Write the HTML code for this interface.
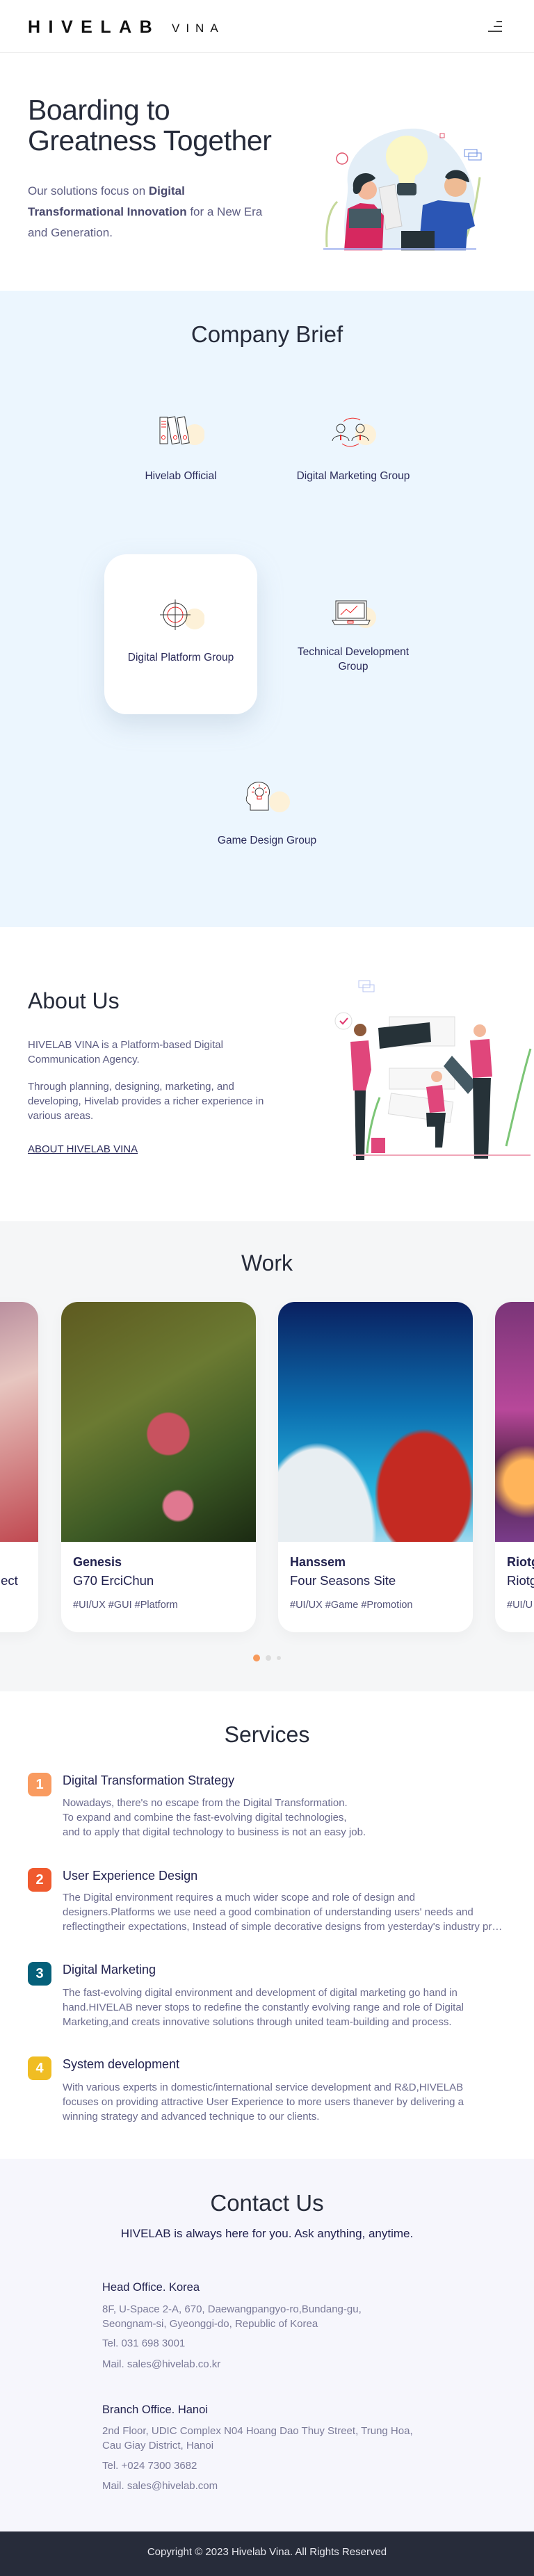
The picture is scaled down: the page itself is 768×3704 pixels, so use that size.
<!DOCTYPE html>
<html><head><meta charset="utf-8">
<style>
*{margin:0;padding:0;box-sizing:border-box}
html,body{width:768px;height:3704px;overflow:hidden}
body{position:relative;font-family:"Liberation Sans",sans-serif;color:#262b3a;background:#fff}
#w{position:absolute;left:0;top:0;width:768px;height:3704px;overflow:hidden}
.a{position:absolute}
.sec{position:absolute;left:0;width:768px}
.h2{position:absolute;left:0;width:768px;text-align:center;font-size:33px;font-weight:500;color:#262b3a}
.lbl{font-size:15.5px;color:#2b2b5a;text-align:center;position:absolute}
.card{position:absolute;top:1872px;width:280px;height:475px;border-radius:24px;overflow:hidden;background:#fff;box-shadow:0 6px 20px rgba(0,0,0,.04)}
.card .img{height:345px}
.card .t1{position:absolute;left:17px;top:364px;font-size:18px;font-weight:bold;color:#22224f}
.card .t2{position:absolute;left:17px;top:390px;font-size:18.5px;color:#22224f}
.card .t3{position:absolute;left:17px;top:428px;font-size:14.5px;color:#55557a}
.badge{position:absolute;left:40px;width:34px;height:34px;border-radius:8px;color:#fff;font-size:20px;font-weight:bold;text-align:center;line-height:34px}
.st{position:absolute;left:90px;font-size:18px;color:#22224f;font-weight:500}
.sb{position:absolute;left:90px;width:650px;font-size:15px;line-height:21px;color:#6b6b8e;white-space:nowrap;overflow:hidden;text-overflow:ellipsis}
.ct{position:absolute;left:147px;font-size:15px;color:#7a7a98;line-height:21px}
</style></head><body><div id="w">

<!-- header -->
<div class="sec" style="top:0;height:76px;border-bottom:1px solid #eee"></div>
<div class="a" style="left:40px;top:25px;font-size:25px;font-weight:bold;letter-spacing:11.5px;color:#111">HIVELAB</div>
<div class="a" style="left:247px;top:31px;font-size:17px;letter-spacing:9px;color:#111">VINA</div>
<div class="a" style="left:714px;top:30px;width:8px;height:2px;background:#444"></div>
<div class="a" style="left:710px;top:37px;width:12px;height:2px;background:#444"></div>
<div class="a" style="left:702px;top:44px;width:20px;height:2px;background:#444"></div>

<!-- hero -->
<div class="a" style="left:40px;top:136px;font-size:41px;line-height:44px;color:#262b3a;letter-spacing:-0.5px">Boarding to<br>Greatness Together</div>
<div class="a" style="left:40px;top:260px;font-size:17px;line-height:30px;color:#5d5d82;width:400px;white-space:nowrap">Our solutions focus on <b style="color:#4a4a6e">Digital</b><br><b style="color:#4a4a6e">Transformational Innovation</b> for a New Era<br>and Generation.</div>
<svg class="a" style="left:440px;top:170px" width="280" height="200" viewBox="0 0 280 200">
<path d="M60 95 C55 50 100 18 150 15 C200 12 230 60 240 100 C250 140 235 185 200 188 L60 188 C48 150 62 120 60 95Z" fill="#e3eef7"/>
<circle cx="145" cy="55" r="30" fill="#fbf7c6"/>
<path d="M132 80 L158 80 L155 95 L135 95Z" fill="#fbf7c6"/>
<rect x="131" y="93" width="28" height="18" rx="4" fill="#37474f"/>
<circle cx="52" cy="58" r="8" fill="none" stroke="#e0566d" stroke-width="1.5"/>
<path d="M228 45 h18 v10 h-18z M234 50 h18 v10 h-18z" fill="#fff" stroke="#6b8ee0" stroke-width="1"/>
<rect x="193" y="22" width="6" height="6" fill="none" stroke="#e0566d"/>
<path d="M30 185 C28 150 35 130 45 120" stroke="#c5d89a" stroke-width="3" fill="none"/>
<path d="M225 185 C240 150 245 120 250 85" stroke="#c5d89a" stroke-width="3" fill="none"/>
<path d="M105 100 L128 95 L138 155 L115 160Z" fill="#eee" stroke="#ccc"/>
<path d="M55 190 L60 130 L78 122 L98 124 L112 140 L110 190Z" fill="#d6285f"/>
<circle cx="88" cy="103" r="14" fill="#f3b99b"/>
<path d="M68 100 C65 80 90 72 100 86 C96 92 84 90 80 100 C78 112 66 112 68 100Z" fill="#263238"/>
<rect x="62" y="130" width="46" height="28" fill="#455a64"/>
<path d="M162 190 L168 125 L190 118 L235 122 L243 155 L232 160 L230 190Z" fill="#2b56b5"/>
<circle cx="215" cy="97" r="16" fill="#eebb94"/>
<path d="M200 85 C205 70 232 70 235 92 C228 92 220 82 205 88Z" fill="#263238"/>
<rect x="137" y="162" width="48" height="28" fill="#263238"/>
<rect x="25" y="187" width="220" height="2" fill="#a8b8f0"/>
</svg>

<!-- company brief -->
<div class="sec" style="top:418px;height:915px;background:#ecf6fe"></div>
<div class="h2" style="top:462px">Company Brief</div>
<svg class="a" style="left:228px;top:598px" width="66" height="50" viewBox="0 0 66 50">
<circle cx="52" cy="27" r="15" fill="#fdf1d8"/>
<rect x="2" y="2" width="11" height="38" fill="#fff" stroke="#333"/>
<rect x="16" y="2" width="11" height="38" fill="#fff" stroke="#333" transform="rotate(-10 21 21)"/>
<rect x="30" y="2" width="11" height="38" fill="#fff" stroke="#333" transform="rotate(-10 35 21)"/>
<path d="M4 8h7M4 12h7M4 16h7" stroke="#e22" stroke-width="1"/><circle cx="7" cy="31" r="2.5" fill="none" stroke="#e22"/>
<circle cx="24" cy="31" r="2.5" fill="none" stroke="#e22"/><circle cx="38" cy="31" r="2.5" fill="none" stroke="#e22"/>
</svg>
<svg class="a" style="left:476px;top:600px" width="66" height="50" viewBox="0 0 66 50">
<circle cx="50" cy="25" r="15" fill="#fdf1d8"/>
<circle cx="14" cy="16" r="6" fill="none" stroke="#333"/><path d="M2 34 C3 24 25 24 26 34" fill="none" stroke="#333"/>
<circle cx="42" cy="16" r="6" fill="none" stroke="#333"/><path d="M30 34 C31 24 53 24 54 34" fill="none" stroke="#333"/>
<path d="M14 25 v8 M42 25 v8" stroke="#e22" stroke-width="2"/>
<path d="M42 4 C35 0 25 0 18 6 M16 38 C24 44 34 42 40 38" fill="none" stroke="#e22"/>
</svg>
<div class="a" style="left:150px;top:797px;width:220px;height:230px;border-radius:32px;background:#fff;box-shadow:0 15px 35px rgba(160,180,200,.35)"></div>
<svg class="a" style="left:228px;top:862px" width="66" height="50" viewBox="0 0 66 50">
<circle cx="52" cy="28" r="15" fill="#fdf1d8"/>
<circle cx="24" cy="22" r="17" fill="none" stroke="#333"/><circle cx="24" cy="22" r="11" fill="none" stroke="#e22"/>
<path d="M24 0v44M2 22h44" stroke="#333"/>
</svg>
<svg class="a" style="left:476px;top:860px" width="66" height="50" viewBox="0 0 66 50">
<circle cx="50" cy="28" r="15" fill="#fdf1d8"/>
<rect x="7" y="4" width="44" height="28" fill="#fff" stroke="#333"/><rect x="10" y="7" width="38" height="22" fill="none" stroke="#333"/>
<path d="M2 32h54l-3 6H5z" fill="#fff" stroke="#333"/>
<path d="M14 24l8-8 6 5 10-10" fill="none" stroke="#e22"/><rect x="24" y="33" width="8" height="3" fill="none" stroke="#e22"/>
</svg>
<svg class="a" style="left:352px;top:1123px" width="66" height="50" viewBox="0 0 66 50">
<circle cx="50" cy="30" r="15" fill="#fdf1d8"/>
<path d="M8 42 V34 C0 30 2 24 4 20 C2 6 14 0 24 2 C34 4 38 14 34 22 V42Z" fill="#fff" stroke="#333"/>
<circle cx="21" cy="16" r="6" fill="none" stroke="#333"/><path d="M18 22h6v4h-6z" fill="none" stroke="#e22"/>
<path d="M21 5v3M12 9l2 2M30 9l-2 2M10 16h3M29 16h3" stroke="#e22"/>
</svg>
<div class="lbl" style="left:140px;top:676px;width:240px">Hivelab Official</div>
<div class="lbl" style="left:388px;top:676px;width:240px">Digital Marketing Group</div>
<div class="lbl" style="left:140px;top:937px;width:240px">Digital Platform Group</div>
<div class="lbl" style="left:388px;top:927px;width:240px;line-height:21px">Technical Development<br>Group</div>
<div class="lbl" style="left:264px;top:1200px;width:240px">Game Design Group</div>

<!-- about -->
<div class="a" style="left:40px;top:1421px;font-size:32px;color:#262b3a">About Us</div>
<div class="a" style="left:40px;top:1492px;font-size:15px;line-height:21px;color:#5d5d82;width:370px">HIVELAB VINA is a Platform-based Digital<br>Communication Agency.</div>
<div class="a" style="left:40px;top:1552px;font-size:15px;line-height:21px;color:#5d5d82;width:380px">Through planning, designing, marketing, and<br>developing, Hivelab provides a richer experience in<br>various areas.</div>
<div class="a" style="left:40px;top:1644px;font-size:15px;color:#2b2b5a;text-decoration:underline">ABOUT HIVELAB VINA</div>
<svg class="a" style="left:468px;top:1408px" width="300" height="262" viewBox="0 0 300 262">
<path d="M48 2h16v10H48z M54 8h16v10H54z" fill="#fff" stroke="#b9c6f0"/>
<rect x="92" y="54" width="94" height="42" fill="#f7f7f7" stroke="#ddd"/>
<rect x="92" y="128" width="94" height="30" fill="#f7f7f7" stroke="#ddd"/>
<rect x="92" y="170" width="90" height="30" fill="#f7f7f7" stroke="#ddd" transform="rotate(8 137 185)"/>
<circle cx="26" cy="60" r="12" fill="#fff" stroke="#ddd"/><path d="M21 60l4 4 7-8" stroke="#e0356d" stroke-width="2" fill="none"/>
<path d="M76 70 L150 62 L152 90 L78 100Z" fill="#263238"/>
<path d="M170 125 L182 110 L218 150 L205 165Z" fill="#455a64"/>
<circle cx="50" cy="73" r="9" fill="#8d5a3b"/>
<path d="M36 90 L62 88 L66 130 L58 160 L40 160Z" fill="#e0467b"/>
<path d="M42 160 h16 l-2 100 h-12z" fill="#263238"/>
<circle cx="160" cy="140" r="8" fill="#f3b99b"/>
<path d="M145 155 L168 152 L172 190 L150 192Z" fill="#e0467b"/>
<path d="M145 192 h28 l-5 50 h-10 l0-30 h-12z" fill="#263238"/>
<circle cx="222" cy="74" r="9" fill="#f3b99b"/>
<path d="M208 88 L236 86 L240 140 L212 142Z" fill="#e0467b"/>
<path d="M212 142 h26 l-4 116 h-20z" fill="#263238"/>
<rect x="66" y="228" width="20" height="22" fill="#e0467b"/>
<path d="M260 240 C270 200 280 150 295 100" stroke="#7cc576" stroke-width="3" fill="none"/>
<path d="M60 250 C62 220 70 190 78 170" stroke="#7cc576" stroke-width="3" fill="none"/>
<rect x="40" y="252" width="255" height="2" fill="#f0a6b8"/>
</svg>

<!-- work -->
<div class="sec" style="top:1756px;height:676px;background:#f5f6f7"></div>
<div class="h2" style="top:1798px;font-size:32px">Work</div>
<div class="card" style="left:-225px"><div class="img" style="background:linear-gradient(160deg,#9b6a88,#e7c6c0 45%,#c04850)"></div><div class="t2" style="left:222px">ject</div></div>
<div class="card" style="left:88px"><div class="img" style="background:radial-gradient(circle at 60% 85%,#e07890 0 6%,transparent 7%),radial-gradient(circle at 55% 55%,#c8525f 0 12%,transparent 13%),linear-gradient(150deg,#5e5a20,#6b7a32 40%,#3d5a25 70%,#1b2a12)"></div>
<div class="t1">Genesis</div><div class="t2">G70 ErciChun</div><div class="t3">#UI/UX #GUI #Platform</div></div>
<div class="card" style="left:400px"><div class="img" style="background:radial-gradient(ellipse at 75% 80%,#c42a22 0 22%,transparent 24%),radial-gradient(ellipse at 20% 95%,#e8eef2 0 25%,transparent 27%),linear-gradient(180deg,#0a2060,#0c6fb0 45%,#28b6e0 80%,#9fd8ee)"></div>
<div class="t1">Hanssem</div><div class="t2">Four Seasons Site</div><div class="t3">#UI/UX #Game #Promotion</div></div>
<div class="card" style="left:712px;width:56px;border-radius:24px 0 0 24px"><div class="img" style="background:radial-gradient(circle at 80% 75%,#ffb45a 0 12%,transparent 20%),linear-gradient(180deg,#7a3578,#b8489a 45%,#4a2040 70%,#7a3c8a)"></div>
<div class="t1">Riotg</div><div class="t2">Riotg</div><div class="t3">#UI/U</div></div>
<div class="a" style="left:364px;top:2379px;width:10px;height:10px;border-radius:5px;background:#f79a5b"></div>
<div class="a" style="left:382px;top:2380px;width:8px;height:8px;border-radius:4px;background:#ddd"></div>
<div class="a" style="left:398px;top:2381px;width:6px;height:6px;border-radius:3px;background:#ddd"></div>

<!-- services -->
<div class="h2" style="top:2476px;font-size:32px">Services</div>
<div class="badge" style="top:2549px;background:#f99b60">1</div>
<div class="st" style="top:2550px">Digital Transformation Strategy</div>
<div class="sb" style="top:2582px">Nowadays, there's no escape from the Digital Transformation.<br>To expand and combine the fast-evolving digital technologies,<br>and to apply that digital technology to business is not an easy job.</div>
<div class="badge" style="top:2686px;background:#f05a2e">2</div>
<div class="st" style="top:2687px">User Experience Design</div>
<div class="sb" style="top:2718px;height:63px">The Digital environment requires a much wider scope and role of design and<br>designers.Platforms we use need a good combination of understanding users' needs and<br><span style="display:inline-block;width:636px;overflow:hidden;text-overflow:ellipsis;vertical-align:top">reflectingtheir expectations, Instead of simple decorative designs from yesterday's industry practices</span></div>
<div class="badge" style="top:2821px;background:#05607a">3</div>
<div class="st" style="top:2822px">Digital Marketing</div>
<div class="sb" style="top:2855px">The fast-evolving digital environment and development of digital marketing go hand in<br>hand.HIVELAB never stops to redefine the constantly evolving range and role of Digital<br>Marketing,and creats innovative solutions through united team-building and process.</div>
<div class="badge" style="top:2957px;background:#f0bd23">4</div>
<div class="st" style="top:2958px">System development</div>
<div class="sb" style="top:2991px">With various experts in domestic/international service development and R&amp;D,HIVELAB<br>focuses on providing attractive User Experience to more users thanever by delivering a<br>winning strategy and advanced technique to our clients.</div>

<!-- contact -->
<div class="sec" style="top:3104px;height:536px;background:#f6f6fc"></div>
<div class="h2" style="top:3149px">Contact Us</div>
<div class="a" style="left:0;width:768px;text-align:center;top:3202px;font-size:17px;color:#22224f">HIVELAB is always here for you. Ask anything, anytime.</div>
<div class="a" style="left:147px;top:3280px;font-size:16.5px;font-weight:500;color:#22224f">Head Office. Korea</div>
<div class="ct" style="top:3310px">8F, U-Space 2-A, 670, Daewangpangyo-ro,Bundang-gu,<br>Seongnam-si, Gyeonggi-do, Republic of Korea</div>
<div class="ct" style="top:3359px">Tel. 031 698 3001</div>
<div class="ct" style="top:3389px">Mail. sales@hivelab.co.kr</div>
<div class="a" style="left:147px;top:3456px;font-size:16.5px;font-weight:500;color:#22224f">Branch Office. Hanoi</div>
<div class="ct" style="top:3485px">2nd Floor, UDIC Complex N04 Hoang Dao Thuy Street, Trung Hoa,<br>Cau Giay District, Hanoi</div>
<div class="ct" style="top:3535px">Tel. +024 7300 3682</div>
<div class="ct" style="top:3564px">Mail. sales@hivelab.com</div>

<!-- footer -->
<div class="sec" style="top:3640px;height:64px;background:#272c3a"></div>
<div class="a" style="left:0;width:768px;text-align:center;top:3661px;font-size:15px;color:#e8e8ee">Copyright © 2023 Hivelab Vina. All Rights Reserved</div>
</div></body></html>
